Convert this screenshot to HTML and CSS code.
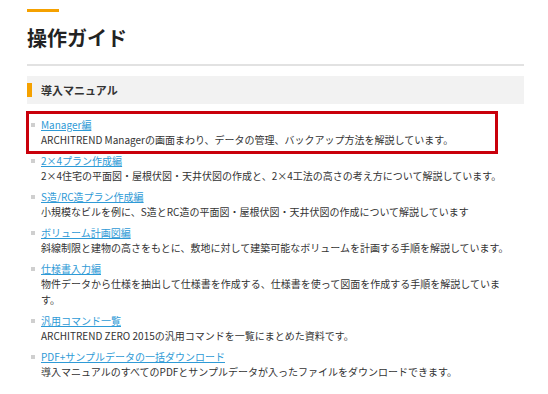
FILE: index.html
```html
<html>
<head>
	<meta charset="utf-8">
	<link rel="stylesheet" href="styles.css">
</head>
<body>
	<div id="guide">
		<div class="accent"></div>
		<h1 class="page-title">操作ガイド</h1>

		<h2 class="section-title">導入マニュアル</h2>

		<ul class="manuals">
			<li class="is-marked">
				<a href="#">Manager編</a>
				<p>ARCHITREND Managerの画面まわり、データの管理、バックアップ方法を解説しています。</p>
			</li>
			<li>
				<a href="#">2×4プラン作成編</a>
				<p>2×4住宅の平面図・屋根伏図・天井伏図の作成と、2×4工法の高さの考え方について解説しています。</p>
			</li>
			<li>
				<a href="#">S造/RC造プラン作成編</a>
				<p>小規模なビルを例に、S造とRC造の平面図・屋根伏図・天井伏図の作成について解説しています</p>
			</li>
			<li>
				<a href="#">ボリューム計画図編</a>
				<p>斜線制限と建物の高さをもとに、敷地に対して建築可能なボリュームを計画する手順を解説しています。</p>
			</li>
			<li>
				<a href="#">仕様書入力編</a>
				<p>物件データから仕様を抽出して仕様書を作成する、仕様書を使って図面を作成する手順を解説しています。</p>
			</li>
			<li>
				<a href="#">汎用コマンド一覧</a>
				<p>ARCHITREND ZERO 2015の汎用コマンドを一覧にまとめた資料です。</p>
			</li>
			<li>
				<a href="#">PDF+サンプルデータの一括ダウンロード</a>
				<p>導入マニュアルのすべてのPDFとサンプルデータが入ったファイルをダウンロードできます。</p>
			</li>
		</ul>
	</div>
</body>
</html>
```

FILE: styles.css
```css
body{
	margin:0;
	background:#fff;
	color:#333;
	font-family:"Noto Sans CJK JP", "Noto Sans", sans-serif;
}

#guide{
	width:497px;
	padding:9px 0 0 27px;
}

.accent{
	width:32px;
	height:3px;
	background:#f5a100;
}

.page-title{
	margin:12px 0 0;
	padding-bottom:12px;
	border-bottom:2px solid #e2e2e2;
	font-size:20px;
	line-height:28px;
	font-weight:bold;
	color:#222;
}

.section-title{
	display:flex;
	align-items:center;
	gap:9px;
	margin:10px 0 0;
	height:28px;
	background:#f2f2f2;
	font-size:11px;
	font-weight:bold;
	color:#333;
}
.section-title::before{
	content:"";
	width:5px;
	height:14px;
	background:#f5a100;
}

.manuals{
	list-style:none;
	margin:13px 0 0;
	padding:0 14px 0 0;
}
.manuals > li{
	position:relative;
	padding-left:14px;
	margin-bottom:5px;
	font-size:10px;
}
.manuals > li::before{
	content:"";
	position:absolute;
	left:4px;
	top:6px;
	width:4px;
	height:4px;
	background:#cfcfcf;
}
.manuals a{
	display:block;
	line-height:15px;
	color:#2e9ad6;
}
.manuals p{
	margin:0;
	line-height:16px;
}

.manuals > li.is-marked::after{
	content:"";
	position:absolute;
	left:-1px;
	top:-6px;
	width:466px;
	height:37px;
	border:3px solid #c9000b;
}
```
